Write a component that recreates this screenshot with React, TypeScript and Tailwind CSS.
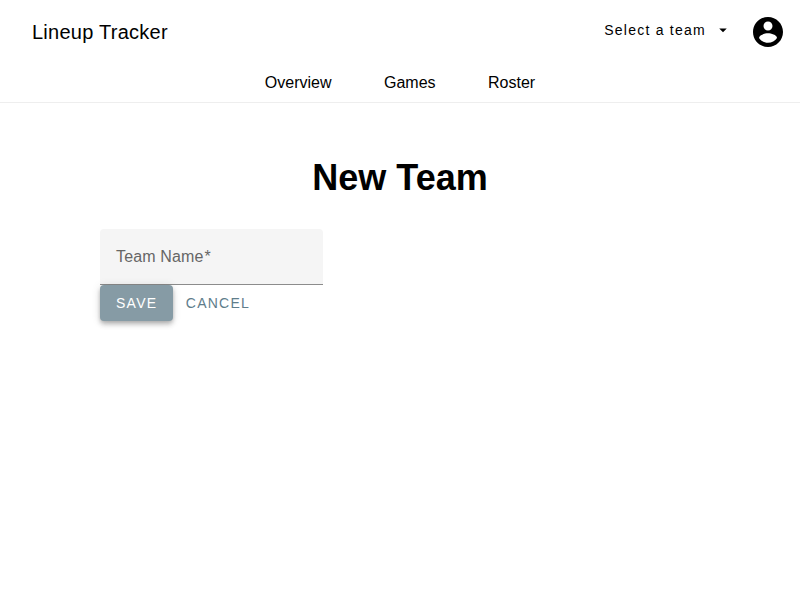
import React from "react";

const tabs = ["Overview", "Games", "Roster"];

export default function App() {
  return (
    <div className="min-h-screen bg-white text-black font-['Liberation_Sans',Arial,sans-serif]">
      <header className="h-[103px] border-b border-[#eeeeee]">
        <div className="flex h-16 items-center pl-8 pr-[14px]">
          <h1 className="flex-1 text-[20px] leading-8 tracking-[0.25px]">Lineup Tracker</h1>
          <button className="mb-1 flex items-center text-[14px] leading-4 tracking-[1.25px]">
            Select a team
            <svg className="ml-2 size-[18px]" viewBox="0 0 24 24" fill="currentColor">
              <path d="M7 10l5 5 5-5z" />
            </svg>
          </button>
          <svg className="ml-[18px] size-9" viewBox="0 0 24 24" fill="currentColor">
            <path d="M12 2C6.48 2 2 6.48 2 12s4.48 10 10 10 10-4.48 10-10S17.52 2 12 2zm0 3c1.66 0 3 1.34 3 3s-1.34 3-3 3-3-1.34-3-3 1.34-3 3-3zm0 14.2c-2.5 0-4.71-1.28-6-3.22.03-1.99 4-3.08 6-3.08 1.99 0 5.97 1.09 6 3.08-1.29 1.94-3.5 3.22-6 3.22z" />
          </svg>
        </div>
        <nav className="flex justify-center gap-[52.5px] pt-[10px] text-[16px] leading-[18px]">
          {tabs.map((tab) => (
            <a key={tab}>{tab}</a>
          ))}
        </nav>
      </header>
      <main className="mx-auto w-[600px] pt-[54px]">
        <h2 className="text-center text-[36px] leading-[41px] font-bold">New Team</h2>
        <div className="mt-[31px] flex h-14 w-[223px] items-center rounded-t border-b border-[#8c8c8c] bg-[#f5f5f5] px-4 text-[16px] leading-[18px] tracking-[0.15px] text-[#666666]">
          Team Name<span className="ml-px">*</span>
        </div>
        <div className="flex text-[14px] leading-9 tracking-[1.25px]">
          <button className="h-9 w-[73px] rounded bg-[#869ba5] pl-4 text-left text-white opacity-[0.999] shadow-[0_2px_4px_-1px_rgba(0,0,0,.2),0_4px_5px_0_rgba(0,0,0,.14),0_1px_10px_0_rgba(0,0,0,.12)]">
            SAVE
          </button>
          <button className="ml-[4.8px] h-9 px-2 text-[#607d8b]">CANCEL</button>
        </div>
      </main>
    </div>
  );
}
